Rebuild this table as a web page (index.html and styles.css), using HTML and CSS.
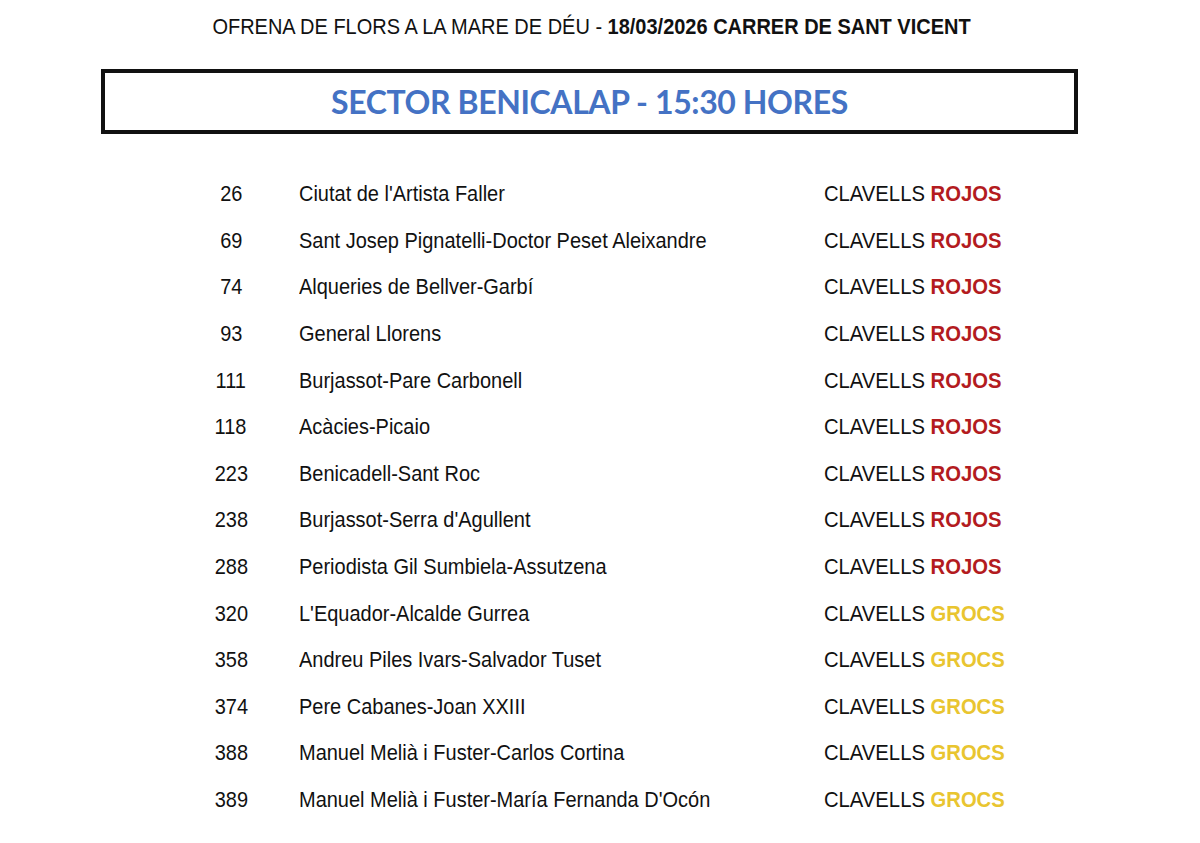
FILE: index.html
```html
<!DOCTYPE html>
<html lang="ca">
<head>
<meta charset="utf-8">
<title>Ofrena de flors - Sector Benicalap</title>
<link rel="stylesheet" href="styles.css">
</head>
<body>
<div class="page">
  <h1 class="top"><span class="narrow">OFRENA DE FLORS A LA MARE DE DÉU - <b>18/03/2026 CARRER DE SANT VICENT</b></span></h1>
  <div class="sector"><h2>SECTOR BENICALAP - 15:30 HORES</h2></div>
  <div class="list">
    <span class="num"><span class="narrow">26</span></span><span class="name"><span class="narrow">Ciutat de l'Artista Faller</span></span><span class="kind"><span class="narrow">CLAVELLS <b class="red">ROJOS</b></span></span>
    <span class="num"><span class="narrow">69</span></span><span class="name"><span class="narrow">Sant Josep Pignatelli-Doctor Peset Aleixandre</span></span><span class="kind"><span class="narrow">CLAVELLS <b class="red">ROJOS</b></span></span>
    <span class="num"><span class="narrow">74</span></span><span class="name"><span class="narrow">Alqueries de Bellver-Garbí</span></span><span class="kind"><span class="narrow">CLAVELLS <b class="red">ROJOS</b></span></span>
    <span class="num"><span class="narrow">93</span></span><span class="name"><span class="narrow">General Llorens</span></span><span class="kind"><span class="narrow">CLAVELLS <b class="red">ROJOS</b></span></span>
    <span class="num"><span class="narrow">111</span></span><span class="name"><span class="narrow">Burjassot-Pare Carbonell</span></span><span class="kind"><span class="narrow">CLAVELLS <b class="red">ROJOS</b></span></span>
    <span class="num"><span class="narrow">118</span></span><span class="name"><span class="narrow">Acàcies-Picaio</span></span><span class="kind"><span class="narrow">CLAVELLS <b class="red">ROJOS</b></span></span>
    <span class="num"><span class="narrow">223</span></span><span class="name"><span class="narrow">Benicadell-Sant Roc</span></span><span class="kind"><span class="narrow">CLAVELLS <b class="red">ROJOS</b></span></span>
    <span class="num"><span class="narrow">238</span></span><span class="name"><span class="narrow">Burjassot-Serra d'Agullent</span></span><span class="kind"><span class="narrow">CLAVELLS <b class="red">ROJOS</b></span></span>
    <span class="num"><span class="narrow">288</span></span><span class="name"><span class="narrow">Periodista Gil Sumbiela-Assutzena</span></span><span class="kind"><span class="narrow">CLAVELLS <b class="red">ROJOS</b></span></span>
    <span class="num"><span class="narrow">320</span></span><span class="name"><span class="narrow">L'Equador-Alcalde Gurrea</span></span><span class="kind"><span class="narrow">CLAVELLS <b class="yellow">GROCS</b></span></span>
    <span class="num"><span class="narrow">358</span></span><span class="name"><span class="narrow">Andreu Piles Ivars-Salvador Tuset</span></span><span class="kind"><span class="narrow">CLAVELLS <b class="yellow">GROCS</b></span></span>
    <span class="num"><span class="narrow">374</span></span><span class="name"><span class="narrow">Pere Cabanes-Joan XXIII</span></span><span class="kind"><span class="narrow">CLAVELLS <b class="yellow">GROCS</b></span></span>
    <span class="num"><span class="narrow">388</span></span><span class="name"><span class="narrow">Manuel Melià i Fuster-Carlos Cortina</span></span><span class="kind"><span class="narrow">CLAVELLS <b class="yellow">GROCS</b></span></span>
    <span class="num"><span class="narrow">389</span></span><span class="name"><span class="narrow">Manuel Melià i Fuster-María Fernanda D'Ocón</span></span><span class="kind"><span class="narrow">CLAVELLS <b class="yellow">GROCS</b></span></span>
  </div>
</div>
</body>
</html>
```
FILE: styles.css
```css
html, body {
  margin: 0;
  padding: 0;
  background: #fff;
}
.page {
  width: 1200px;
  height: 843px;
  font-family: "Liberation Sans", Arial, sans-serif;
  color: #111;
}
.narrow {
  display: inline-block;
  white-space: nowrap;
  transform: scaleX(0.908);
  transform-origin: left center;
}
.top {
  margin: 0;
  padding: 12px 17px 0 0;
  height: 30px;
  line-height: 30px;
  font-size: 22px;
  font-weight: normal;
  text-align: center;
}
.top .narrow { transform-origin: center center; }
.top b { font-weight: bold; }
.sector {
  margin: 27px 0 0 101px;
  width: 977px;
  height: 65px;
  box-sizing: border-box;
  border: 4px solid #111;
  display: flex;
  align-items: center;
  justify-content: center;
}
.sector h2 {
  margin: 0;
  font-family: Lato, "Open Sans", sans-serif;
  font-weight: bold;
  font-size: 32px;
  color: #4472c4;
  letter-spacing: -0.4px;
}
.list {
  margin-top: 37px;
  padding-left: 200px;
  display: grid;
  grid-template-columns: 62px 488px auto;
  column-gap: 37px;
  grid-auto-rows: 46.6px;
  align-items: center;
  font-size: 22px;
}
.num { text-align: center; }
.num .narrow { transform-origin: center center; }
.kind .narrow { transform: scaleX(0.92); }
.red { color: #b31b20; }
.yellow { color: #e9c530; }
```
